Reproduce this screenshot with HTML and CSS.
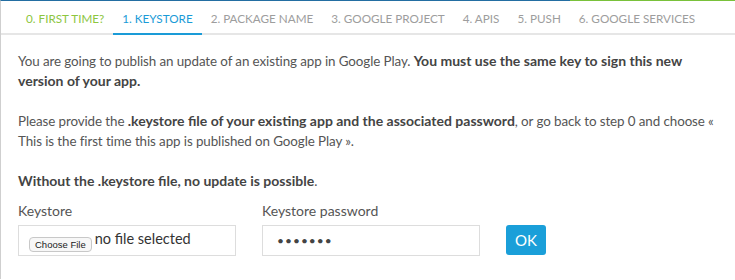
FILE: index.html
```html
<!DOCTYPE html>
<html lang="en">
<head>
  <meta charset="UTF-8">
  <meta name="viewport" content="width=device-width, initial-scale=1.0">
  <title>Publish update - Keystore</title>
  <link rel="stylesheet" href="styles.css">
</head>
<body>
  <div class="panel">
    <ul class="steps">
      <li class="step done">0. First time?</li>
      <li class="step active">1. Keystore</li>
      <li class="step">2. Package name</li>
      <li class="step">3. Google project</li>
      <li class="step">4. APIs</li>
      <li class="step">5. Push</li>
      <li class="step">6. Google services</li>
    </ul>

    <div class="content">
      <p>You are going to publish an update of an existing app in Google Play. <strong>You must use the same key to sign this new version of your app.</strong></p>
      <p>Please provide the <strong>.keystore file of your existing app and the associated password</strong>, or go back to step 0 and choose « This is the first time this app is published on Google Play ».</p>
      <p class="warning"><strong>Without the .keystore file, no update is possible</strong>.</p>

      <form class="keystore-form">
        <div class="field">
          <span class="field-label">Keystore</span>
          <label class="file-box" for="keystore">
            <input type="file" id="keystore" class="file-input">
            <span class="file-btn">Choose File</span>
            <span class="file-name">no file selected</span>
          </label>
        </div>
        <div class="field">
          <label class="field-label" for="password">Keystore password</label>
          <input type="password" id="password" class="text-input" value="secret1">
        </div>
        <button type="button" class="btn-ok">OK</button>
      </form>
    </div>
  </div>
</body>
</html>
```

FILE: styles.css
```css
body {
  margin: 0;
  font-family: Lato, "Open Sans", sans-serif;
  color: #555;
  background: #fff;
}
.panel {
  border-top: 1px solid #236ea2;
  border-left: 1px solid #cfcfcf;
  min-height: 279px;
  box-sizing: border-box;
  position: relative;
}
.panel::before {
  content: "";
  position: absolute;
  top: -1px;
  left: 569px;
  right: 0;
  height: 1px;
  background: #79c13a;
}
.steps {
  list-style: none;
  margin: 0;
  padding: 0 0 0 16px;
  display: flex;
  border-bottom: 2px solid #e6e6e6;
}
.step {
  padding: 11px 9px 8px;
  font-size: 11.7px;
  line-height: 13px;
  text-transform: uppercase;
  color: #9d9d9d;
  border-bottom: 2px solid transparent;
  margin-bottom: -2px;
  white-space: nowrap;
}
.step.done {
  color: #8dc63f;
}
.step.active {
  color: #1a9bd7;
  border-bottom-color: #1a9bd7;
}
.content {
  padding: 16px 17px 0;
  font-size: 13.4px;
  letter-spacing: -0.1px;
  line-height: 20px;
}
.content p {
  margin: 0 0 20px;
}
.content p.warning {
  margin-bottom: 9px;
}
.content strong {
  color: #444;
  font-size: 14px;
  letter-spacing: 0;
  font-weight: 700;
}
.keystore-form {
  display: flex;
  align-items: flex-end;
  gap: 26px;
  padding-top: 1px;
  letter-spacing: 0;
}
.field-label {
  display: block;
  margin-bottom: 4px;
  font-size: 14px;
}
.file-box,
.text-input {
  box-sizing: border-box;
  width: 218px;
  height: 31px;
  border: 1px solid #ddd;
  background: #fff;
}
.file-box {
  display: flex;
  align-items: flex-start;
  padding: 3px 10px 0;
  cursor: pointer;
}
.file-input {
  display: none;
}
.file-btn {
  margin-top: 8px;
  padding: 0 5px;
  height: 13px;
  line-height: 13px;
  font-family: "Liberation Sans", Arial, sans-serif;
  font-size: 9.5px;
  color: #222;
  border: 1px solid #c8c8c8;
  border-radius: 4px;
  background: #f7f7f7;
}
.file-name {
  margin-left: 3px;
  font-size: 14.5px;
  line-height: 20px;
  color: #333;
}
.text-input {
  padding: 0 14px;
  font-family: Lato, sans-serif;
  font-size: 12px;
  letter-spacing: 1px;
  color: #444;
  outline: none;
}
.btn-ok {
  width: 40px;
  height: 30px;
  margin-bottom: 1px;
  border: none;
  border-radius: 3px;
  background: #1a9fd9;
  color: #fff;
  font-family: Lato, sans-serif;
  font-size: 15px;
  cursor: pointer;
}
```
